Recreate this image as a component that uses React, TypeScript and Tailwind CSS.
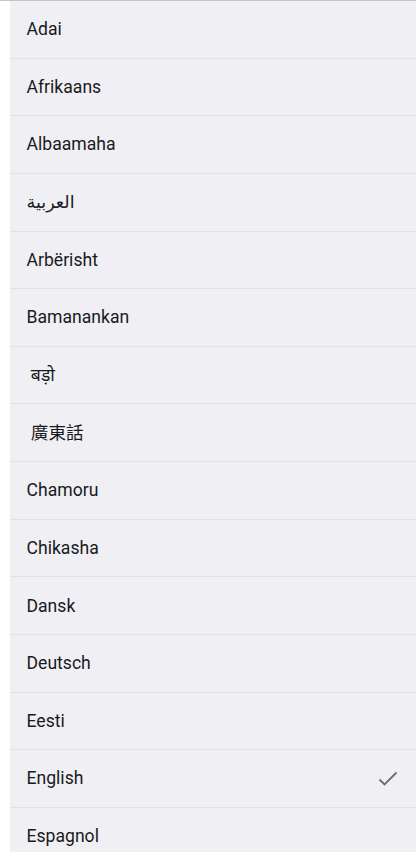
import React from "react";

const langs = [
  "Adai",
  "Afrikaans",
  "Albaamaha",
  "العربية",
  "Arbërisht",
  "Bamanankan",
  " बड़ो",
  " 廣東話",
  "Chamoru",
  "Chikasha",
  "Dansk",
  "Deutsch",
  "Eesti",
  "English",
  "Espagnol",
];

export default function App() {
  return (
    <div className="w-[416px] h-[855px] bg-white overflow-hidden" style={{ fontFamily: "Roboto, 'Noto Sans', 'Noto Sans CJK TC', 'DejaVu Sans', sans-serif" }}>
      <div className="h-[1px] bg-[#c4c4c8]" />
      <div className="ml-[10px] h-[851px] bg-[#efeff4] overflow-hidden">
        {langs.map((l) => (
          <div
            key={l}
            className="h-[57.65px] flex items-center justify-between pl-[16.5px] pr-[18px] border-b border-[#e0e0e5] text-[17.6px] text-[#1a1a1c]"
          >
            <span className="whitespace-pre">{l}</span>
            {l === "English" && (
              <svg width="20" height="16" viewBox="0 0 20 16" fill="none">
                <path d="M1.5 8.5 L6.5 13.5 L18.5 1.5" stroke="#6d6d70" strokeWidth="1.8" />
              </svg>
            )}
          </div>
        ))}
      </div>
    </div>
  );
}
